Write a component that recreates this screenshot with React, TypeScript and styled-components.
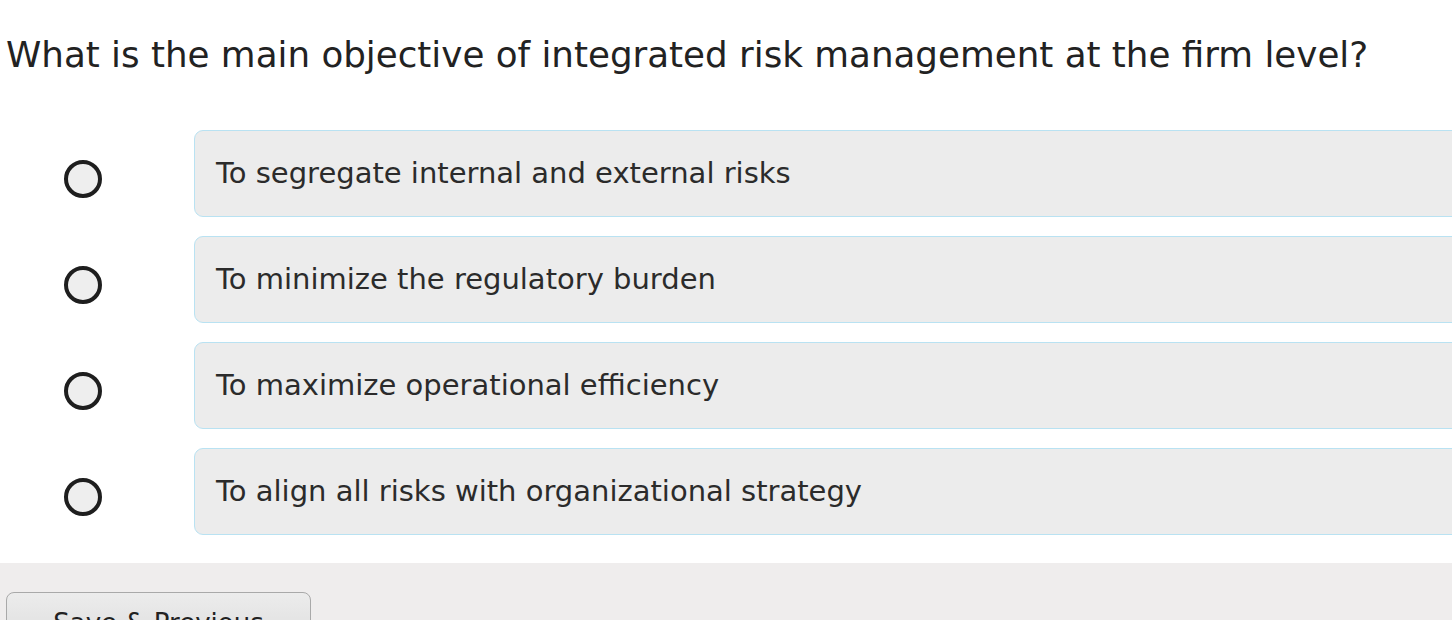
import React from "react";
import styled, { createGlobalStyle } from "styled-components";

const GlobalStyle = createGlobalStyle`
  html, body {
    margin: 0;
    padding: 0;
    background: #fff;
    overflow: hidden;
  }
  body {
    font-family: "DejaVu Sans", "Liberation Sans", Arial, sans-serif;
  }
`;

const options = [
  "To segregate internal and external risks",
  "To minimize the regulatory burden",
  "To maximize operational efficiency",
  "To align all risks with organizational strategy",
];

const App = (): JSX.Element => {
  return (
    <Page>
      <GlobalStyle />
      <QuestionBlock>
        <Question>
          What is the main objective of integrated risk management at the firm
          level?
        </Question>
        <OptionList>
          {options.map((text) => (
            <OptionRow key={text}>
              <RadioCell>
                <Radio />
              </RadioCell>
              <OptionBox>{text}</OptionBox>
            </OptionRow>
          ))}
        </OptionList>
      </QuestionBlock>
      <Footer>
        <NavButton>Save &amp; Previous</NavButton>
      </Footer>
    </Page>
  );
};

export default App;

const Page = styled.div`
  width: 1452px;
  height: 620px;
  overflow: hidden;
  display: flex;
  flex-direction: column;
`;

const QuestionBlock = styled.div`
  padding: 0 0 28px 6px;
`;

const Question = styled.div`
  font-size: 35.7px;
  line-height: 42px;
  color: #222;
  padding-top: 34px;
  white-space: nowrap;
`;

const OptionList = styled.div`
  margin-top: 54px;
  display: flex;
  flex-direction: column;
  gap: 19px;
`;

const OptionRow = styled.div`
  display: grid;
  grid-template-columns: 188px 1400px;
  align-items: center;
`;

const RadioCell = styled.div`
  display: flex;
  justify-content: flex-start;
  padding: 10px 0 0 58px;
`;

const Radio = styled.span`
  width: 30px;
  height: 30px;
  border: 4px solid #1e1e1e;
  border-radius: 50%;
  background: #eeeeee;
  display: block;
`;

const OptionBox = styled.div`
  height: 87px;
  box-sizing: border-box;
  border: 1px solid #b9e2f2;
  border-radius: 9px;
  background: #ececec;
  display: flex;
  align-items: center;
  padding: 0 0 2px 21px;
  font-size: 29px;
  color: #2b2b2b;
`;

const Footer = styled.div`
  flex: 1;
  background: #efeded;
  padding: 29px 0 0 6px;
`;

const NavButton = styled.button`
  width: 305px;
  height: 60px;
  border: 1px solid #a9a9a9;
  border-radius: 8px;
  background: linear-gradient(#ececec, #dcdcdc);
  font-family: "DejaVu Sans", "Liberation Sans", Arial, sans-serif;
  font-size: 26px;
  color: #222;
  padding: 15px 0 0;
  display: flex;
  justify-content: center;
  align-items: flex-start;
`;
